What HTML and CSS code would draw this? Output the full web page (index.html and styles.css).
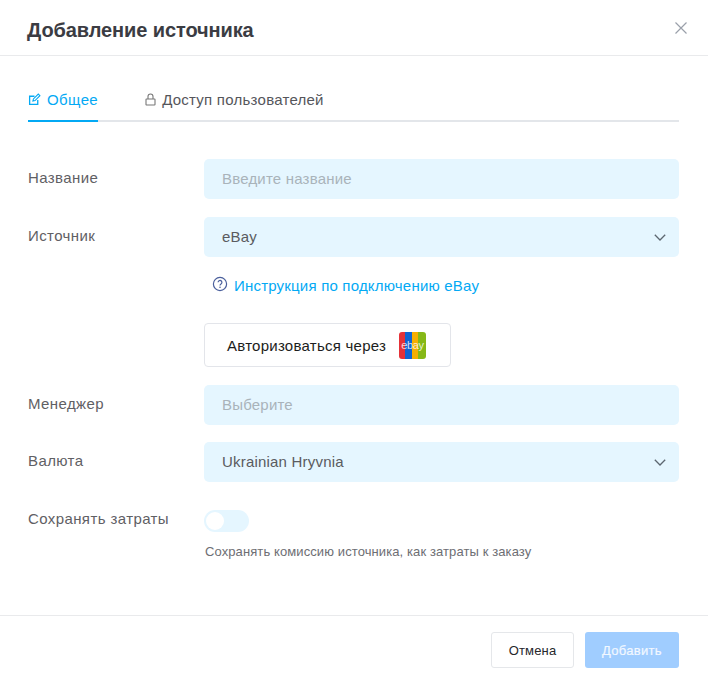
FILE: index.html
```html
<!DOCTYPE html>
<html lang="ru">
<head>
<meta charset="utf-8">
<title>Добавление источника</title>
<link rel="stylesheet" href="styles.css">
</head>
<body>
<div class="modal">
  <header class="head">
    <h1 class="title">Добавление источника</h1>
    <svg class="close" width="14" height="14" viewBox="0 0 14 14"><path d="M1.500 1.500l11 11M12.500 1.500l-11 11" stroke="#9aa0aa" stroke-width="1.200" fill="none"/></svg>
  </header>
  <div class="body">
    <nav class="tabs">
      <div class="tab active">
        <svg width="13" height="13" viewBox="0 0 12 12" fill="none" stroke="#03a9f4" stroke-width="1.200"><path d="M9 6.500V10.500H1.500V3H6"/><path d="M4.500 7.500L5 5.500L9.500 1L11 2.500L6.500 7Z" stroke-width="1"/></svg>
        <span>Общее</span>
      </div>
      <div class="tab">
        <svg width="11" height="13" viewBox="0 0 11 13" fill="none" stroke="#777" stroke-width="1.100"><rect x="1" y="6" width="9" height="6" rx=".6"/><path d="M3 6V3.500a2.500 2.500 0 0 1 5 0V6"/></svg>
        <span>Доступ пользователей</span>
      </div>
    </nav>
    <div class="form">
      <div class="row r-name">
        <label class="label">Название</label>
        <div class="field placeholder">Введите название</div>
      </div>
      <div class="row r-source">
        <label class="label">Источник</label>
        <div class="field select">eBay
          <svg class="chev" width="12" height="7" viewBox="0 0 12 7"><path d="M.8.8L6 6 11.200.8" fill="none" stroke="#5c6670" stroke-width="1.300"/></svg>
        </div>
      </div>
      <div class="help">
        <svg width="16" height="16" viewBox="0 0 16 16" fill="none"><circle cx="8" cy="8" r="6.600" stroke="#4a5f9c" stroke-width="1.200"/><path d="M6.100 6.300a1.900 1.900 0 1 1 2.900 1.600C8.300 8.400 8 8.700 8 9.500" stroke="#4a5f9c" stroke-width="1.200"/><circle cx="8" cy="11.300" r=".8" fill="#4a5f9c"/></svg>
        <a class="link">Инструкция по подключению eBay</a>
      </div>
      <div class="auth-wrap">
        <button class="auth">Авторизоваться через
          <svg class="ebay" width="27" height="27" viewBox="0 0 27 27"><defs><clipPath id="c"><rect width="27" height="27" rx="3"/></clipPath></defs><g clip-path="url(#c)"><rect width="6" height="27" fill="#e53238"/><rect x="6" width="7" height="27" fill="#0f64d2"/><rect x="13" width="6" height="27" fill="#f5af02"/><rect x="19" width="8" height="27" fill="#86b817"/></g><text x="13.500" y="16.500" text-anchor="middle" class="ebay-text">ebay</text></svg>
        </button>
      </div>
      <div class="row r-manager">
        <label class="label">Менеджер</label>
        <div class="field placeholder">Выберите</div>
      </div>
      <div class="row r-currency">
        <label class="label">Валюта</label>
        <div class="field select">Ukrainian Hryvnia
          <svg class="chev" width="12" height="7" viewBox="0 0 12 7"><path d="M.8.8L6 6 11.200.8" fill="none" stroke="#5c6670" stroke-width="1.300"/></svg>
        </div>
      </div>
      <div class="row r-toggle">
        <label class="label">Сохранять затраты</label>
        <div class="toggle-col">
          <div class="toggle"><span class="knob"></span></div>
          <p class="hint">Сохранять комиссию источника, как затраты к заказу</p>
        </div>
      </div>
    </div>
  </div>
  <footer class="foot">
    <button class="btn cancel">Отмена</button>
    <button class="btn submit">Добавить</button>
  </footer>
</div>
</body>
</html>
```
FILE: styles.css
```css
* { box-sizing: border-box; }
html, body { margin: 0; height: 100%; background: #fff; }
body { font-family: "Liberation Sans", Arial, sans-serif; font-size: 15px; color: #3a3b40; overflow: hidden; }
.modal { width: 708px; height: 681px; display: flex; flex-direction: column; }
.head { height: 56px; flex: none; padding: 0 20px 0 27px; display: flex; align-items: center; justify-content: space-between; border-bottom: 1px solid #e9eaec; }
.title { margin: 0; font-size: 20px; font-weight: 700; color: #3b3c43; line-height: 28px; letter-spacing: -.1px; position: relative; top: 2px; }
.close { display: block; }
.body { flex: 1; padding: 0 29px 0 28px; }
.tabs { margin-top: 30px; height: 36px; display: flex; gap: 47px; border-bottom: 2px solid #e3e6ea; }
.tab { height: 36px; display: flex; align-items: flex-start; gap: 6px; color: #55565b; line-height: 28px; letter-spacing: .25px; }
.tab svg { margin-top: 7px; flex: none; }
.tab.active { color: #03a9f4; border-bottom: 2px solid #03a9f4; letter-spacing: .4px; }
.form { padding-top: 37px; }
.row { display: flex; align-items: flex-start; }
.label { width: 176px; flex: none; color: #5f6064; line-height: 38px; letter-spacing: .4px; }
.field { flex: 1; height: 40px; border-radius: 5px; background: #e5f6ff; padding: 0 18px; line-height: 40px; color: #5a5b60; letter-spacing: .2px; display: flex; justify-content: space-between; align-items: center; }
.placeholder { color: #a9b3ba; }
.chev { display: block; margin-right: -5px; }
.r-source { margin-top: 18px; }
.help { margin: 18px 0 0 176px; height: 20px; display: flex; align-items: center; padding-left: 8px; gap: 6px; }
.help svg { position: relative; top: -1px; }
.link { color: #03a9f4; letter-spacing: .2px; }
.auth-wrap { margin: 28px 0 0 176px; }
.auth { width: 247px; height: 44px; border: 1px solid #e3e5ea; border-radius: 4px; background: #fff; display: flex; align-items: center; justify-content: space-between; padding: 0 24px 0 22px; font: inherit; color: #1c1d20; letter-spacing: .25px; }
.ebay { display: block; margin-top: 1px; }
.ebay-text { font: 400 11px "Liberation Sans", sans-serif; fill: #fff; fill-opacity: .8; letter-spacing: -.4px; }
.r-manager { margin-top: 18px; }
.r-currency { margin-top: 17px; }
.r-toggle { margin-top: 17px; }
.r-toggle .label { line-height: 40px; }
.toggle-col { flex: 1; padding-top: 11px; }
.toggle { width: 45px; height: 22px; border-radius: 11px; background: #e5f6ff; position: relative; }
.knob { position: absolute; left: 2px; top: 2px; width: 18px; height: 18px; border-radius: 50%; background: #fff; }
.hint { margin: 12px 0 0 1px; font-size: 13px; line-height: 16px; color: #6d6e73; letter-spacing: .1px; }
.foot { height: 66px; flex: none; border-top: 1px solid #e9eaec; display: flex; justify-content: flex-end; gap: 11px; padding: 16px 29px 0 0; }
.btn { height: 36px; border-radius: 3px; font: inherit; font-size: 13px; letter-spacing: .15px; }
.cancel { width: 83px; background: #fff; border: 1px solid #e5e7ea; color: #26272b; }
.submit { width: 94px; background: #a0cdff; border: 0; color: #f2f8ff; letter-spacing: .3px; -webkit-text-stroke: .2px #f2f8ff; }
```
